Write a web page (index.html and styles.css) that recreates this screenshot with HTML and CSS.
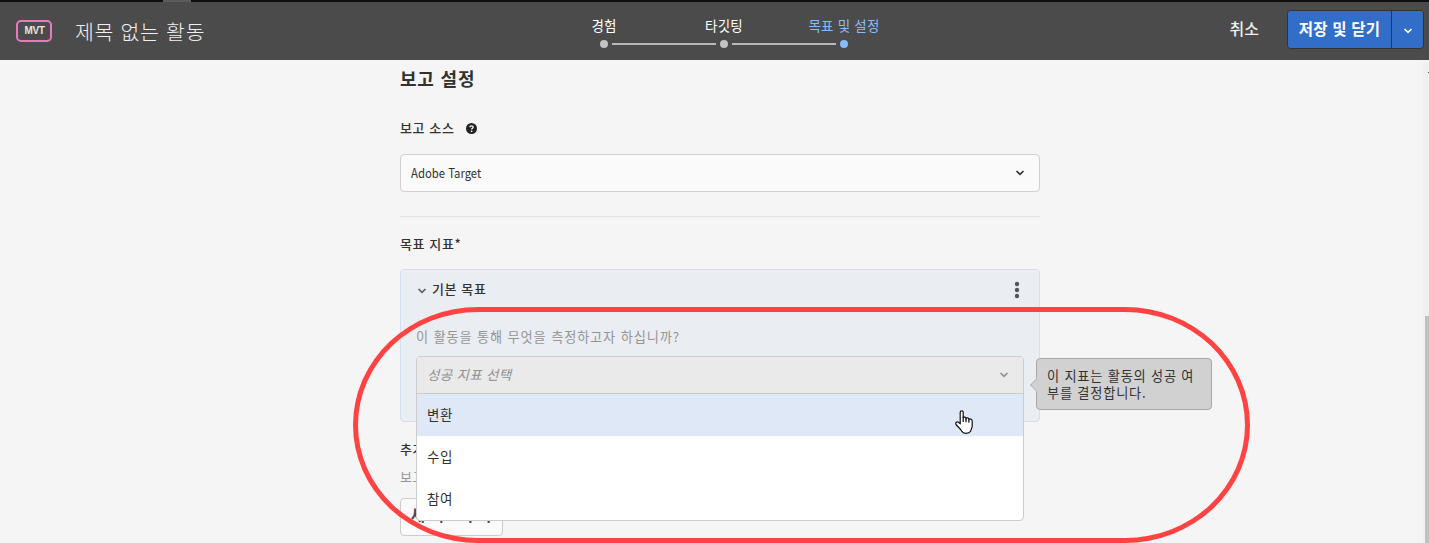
FILE: index.html
```html
<!DOCTYPE html>
<html lang="ko">
<head>
<meta charset="utf-8">
<title>제목 없는 활동</title>
<link rel="stylesheet" href="styles.css">
</head>
<body>
<header class="topbar">
  <span class="tab-edge"></span>
  <div class="brand"><span class="badge">MVT</span><h1 class="title">제목 없는 활동</h1></div>
  <nav class="steps">
    <div class="step"><span class="step-label">경험</span><span class="dot"></span></div>
    <div class="step"><span class="step-label">타깃팅</span><span class="dot"></span></div>
    <div class="step active"><span class="step-label">목표 및 설정</span><span class="dot"></span></div>
  </nav>
  <div class="actions">
    <span class="cancel">취소</span>
    <div class="save-group">
      <button class="save">저장 및 닫기</button>
      <button class="save-more"><svg class="chev" viewBox="0 0 10 6"><path d="M1.5 1 L5 4.3 L8.5 1"/></svg></button>
    </div>
  </div>
</header>
<main class="content">
  <h2 class="heading">보고 설정</h2>
  <div class="label-row"><span>보고 소스</span>
    <svg class="help" viewBox="0 0 10 10"><circle cx="5" cy="5" r="5"/><path d="M3.5 3.9C3.5 2.2 6.5 2.2 6.5 3.9C6.5 4.8 5.1 4.9 5.1 6"/><rect x="4.4" y="6.9" width="1.4" height="1.3"/></svg>
  </div>
  <div class="select"><span class="select-value">Adobe Target</span><svg class="chev" viewBox="0 0 10 6"><path d="M1.5 1 L5 4.3 L8.5 1"/></svg></div>
  <hr class="rule">
  <div class="goal-label">목표 지표*</div>
  <section class="panel">
    <div class="panel-head">
      <svg class="chev" viewBox="0 0 10 6"><path d="M1.5 1 L5 4.3 L8.5 1"/></svg>
      <span>기본 목표</span>
      <svg class="more" viewBox="0 0 6 18"><circle cx="3" cy="3" r="2.2"/><circle cx="3" cy="9" r="2.2"/><circle cx="3" cy="15" r="2.2"/></svg>
    </div>
    <p class="question">이 활동을 통해 무엇을 측정하고자 하십니까?</p>
    <div class="dropdown">
      <div class="dropdown-head"><em>성공 지표 선택</em><svg class="chev" viewBox="0 0 10 6"><path d="M1.5 1 L5 4.3 L8.5 1"/></svg></div>
      <ul class="options"><li class="option hovered">변환</li><li class="option">수입</li><li class="option">참여</li></ul>
    </div>
    <div class="tooltip">이 지표는 활동의 성공 여부를 결정합니다.</div>
  </section>
  <div class="extra-label">추가</div>
  <div class="extra-note">보고</div>
  <button class="add">새 지표 추가</button>
</main>
<div class="scrollbar"><span class="tick"></span><span class="thumb"></span></div>
<svg class="cursor" viewBox="0 0 18 24"><path d="M5.2 13.6V2.2C5.2.4 8.2.4 8.2 2.2V8C8.6 6.7 10.9 6.8 11 8.5C11.6 7.4 13.8 7.7 13.9 9.4C14.6 8.6 17.2 9 17.2 11V16C17.2 18 15.8 19.5 15.6 21.3C14 24 8 24 7 21.6C6 19 2.7 17 1 14.4C.1 12.5 2 11.4 3.3 12.2Z"/><path d="M8.2 7V12M11 8.5V12.2M13.9 9.4V12.8"/></svg>
<div class="highlight"></div>
</body>
</html>
```
FILE: styles.css
```css
* { box-sizing: border-box; }
body { margin: 0; height: 543px; position: relative; overflow: hidden; background: #f5f5f5; color: #323232; font: 14px/20px "Noto Sans CJK KR", sans-serif; }
h1, h2, p, ul { margin: 0; padding: 0; font-weight: 400; list-style: none; }
button { font: inherit; padding: 0; }
.chev { width: 10px; height: 6px; fill: none; stroke: currentColor; stroke-width: 1.7; }

.topbar { position: relative; display: flex; justify-content: space-between; height: 60px; background: #4b4b4b; border-top: 2px solid #0e0e0e; color: #fff; }
.tab-edge { position: absolute; left: 163px; top: -2px; width: 28px; height: 2px; background: #5c5c5c; }
.brand { display: flex; align-items: flex-start; padding: 18px 0 0 16px; }
.badge { width: 36px; height: 22px; border: 2px solid #e879bb; border-radius: 5px; font: bold 10px/18px "Liberation Sans", sans-serif; letter-spacing: -.4px; text-align: center; color: #e4e4e4; padding-left: 1px; }
.title { margin: -4px 0 0 23px; font-size: 20.5px; letter-spacing: .7px; line-height: 30px; font-weight: 300; color: #f0f0f0; }
.steps { position: absolute; left: 544px; top: 13px; display: flex; font-size: 13.5px; letter-spacing: .2px; }
.step { position: relative; width: 120px; display: flex; flex-direction: column; align-items: center; }
.step-label { white-space: nowrap; }
.dot { width: 8px; height: 8px; margin-top: 5px; border-radius: 50%; background: #c2c2c2; }
.step + .step::before { content: ""; position: absolute; left: -52px; top: 28px; width: 104px; height: 2px; background: #b9b9b9; }
.active { color: #86bcff; }
.active .dot { background: #86bcff; }
.actions { display: flex; gap: 28px; padding: 8px 5px 0 0; font-size: 16px; }
.cancel { line-height: 37px; font-weight: 500; color: #eee; }
.save-group { display: flex; width: 137px; height: 39px; border: 1px solid #333; border-radius: 4px; overflow: hidden; }
.save { width: 104px; border: 0; border-right: 1px solid #28364e; background: #326ec8; color: #fff; font-weight: 700; font-size: 15.5px; letter-spacing: .2px; line-height: 34px; padding-bottom: 3px; }
.save-more { flex: 1; border: 0; background: #326ec8; color: #fff; padding-bottom: 5px; }

.content { width: 640px; margin-left: 400px; padding-top: 5px; }
.heading { font-size: 18px; letter-spacing: .8px; line-height: 26px; font-weight: 700; }
.label-row { display: flex; align-items: center; gap: 12px; margin-top: 27px; font-size: 13px; letter-spacing: .6px; font-weight: 500; }
.help { width: 11px; height: 11px; fill: #222; }
.help path { fill: none; stroke: #fff; stroke-width: 1.2; }
.help rect { fill: #fff; }
.select { display: flex; align-items: center; justify-content: space-between; height: 38px; margin-top: 16px; padding: 0 14px 0 10px; background: #fafafa; border: 1px solid #d0d0d0; border-radius: 4px; font-size: 13px; }
.select-value { transform: scaleX(.87); transform-origin: left; }
.rule { height: 1px; margin: 24px 0 17px; border: 0; background: #e1e1e1; }
.goal-label { font-size: 13px; letter-spacing: .6px; font-weight: 500; }
.panel { position: relative; height: 153px; margin-top: 15px; padding: 9px 15px; background: #eaedf2; border: 1px solid #d5dfef; border-radius: 4px; }
.panel-head { display: flex; align-items: center; gap: 5px; font-weight: 500; font-size: 13px; letter-spacing: .6px; }
.panel-head .chev { margin: 3px 0 0 1px; color: #5c5c5c; }
.more { width: 6px; height: 18px; margin: 2px 4px 0 auto; fill: #555; }
.question { margin-top: 28px; color: #959595; font-size: 13.2px; letter-spacing: .86px; white-space: nowrap; }
.dropdown { position: absolute; z-index: 1; left: 15px; top: 86px; width: 608px; height: 165px; border: 1px solid #ccc; border-radius: 4px; background: #fff; overflow: hidden; }
.dropdown-head { display: flex; align-items: center; justify-content: space-between; height: 37px; padding: 0 14px 2px 10px; border-bottom: 1px solid #ccc; background: #eaeaea; color: #919191; font-size: 13.5px; letter-spacing: .3px; }
.dropdown-head .chev { margin-top: 2px; }
.option { height: 42px; line-height: 40px; padding-left: 10px; font-size: 13.5px; letter-spacing: .6px; }
.hovered { background: #dfe8f6; }
.tooltip { position: absolute; left: 635px; top: 88px; width: 176px; height: 52px; padding: 8px 10px; background: #d1d1d1; border: 1px solid #a8a8a8; border-radius: 4px; font-size: 13.2px; letter-spacing: .8px; line-height: 17px; word-break: break-all; }
.tooltip::before { content: ""; position: absolute; left: -5px; top: 21px; width: 8px; height: 8px; background: #d1d1d1; border: 1px solid #bbb; border-top-color: transparent; border-right-color: transparent; transform: rotate(45deg); }
.extra-label { margin-top: 17px; font-size: 13px; letter-spacing: .6px; font-weight: 500; }
.extra-note { margin-top: 8px; color: #959595; font-size: 13px; letter-spacing: .6px; }
.add { display: block; width: 103px; height: 38px; margin-top: 11px; background: #fafafa; border: 1px solid #ccc; border-radius: 4px; color: #4b4b4b; font-size: 15.5px; letter-spacing: .2px; font-weight: 700; line-height: 30px; padding-bottom: 6px; }
.scrollbar { position: absolute; right: 0; top: 62px; bottom: 0; width: 6px; background: #f0f0f0; }
.tick { position: absolute; right: 0; top: 10px; width: 1px; height: 1px; background: #555; }
.thumb { position: absolute; right: 0; top: 254px; bottom: 0; width: 4px; background: #c1c1c1; }
.cursor { position: absolute; z-index: 2; left: 955px; top: 410px; width: 18px; height: 24px; fill: #fff; stroke: #111; stroke-width: 1.2; }
.highlight { position: absolute; z-index: 3; left: 353px; top: 307px; width: 897px; height: 236px; border: 5px solid #ff4343; border-radius: 125px / 118px; }
```
